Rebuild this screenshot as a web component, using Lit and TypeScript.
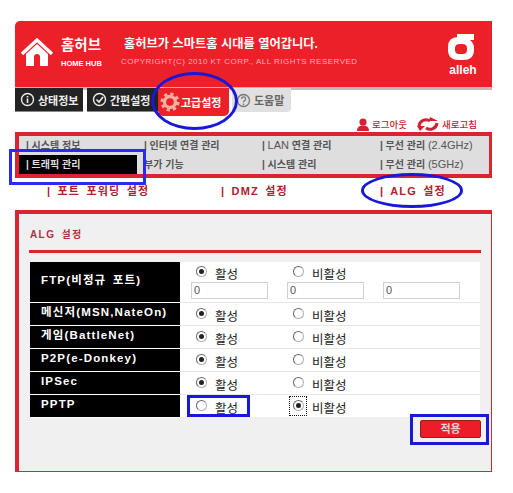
import { LitElement, html, css, svg } from "lit";
import { customElement } from "lit/decorators.js";

const rows = [
  { label: "메신저(MSN,NateOn)", on: true },
  { label: "게임(BattleNet)", on: true },
  { label: "P2P(e-Donkey)", on: true },
  { label: "IPSec", on: true },
  { label: "PPTP", on: false },
];

@customElement("app-root")
export class AppRoot extends LitElement {
  static styles = css`
    :host { display: block; position: relative; width: 513px; height: 493px; overflow: hidden; background: #fff;
      font-family: "Liberation Sans", "Noto Sans CJK KR", sans-serif; }
    .page { width: 477px; padding: 21px 0 0 15px; display: flex; flex-direction: column; }
    .header { height: 66px; background: #ec2029; border-radius: 5px 0 0 0; border-bottom: 3px solid #c4b8b4; display: flex; align-items: flex-start; color: #fff; }
    .home { margin: 16px 0 0 6px; width: 34px; height: 30px; flex: none; }
    .brand { margin: 14px 0 0 6px; width: 60px; flex: none; }
    .brand b { display: block; font-size: 14.5px; line-height: 20px; font-weight: 700; }
    .brand small { display: block; font-size: 7.5px; line-height: 9px; margin-top: 4px; font-weight: 700; white-space: nowrap; }
    .slogan { width: 327px; margin-top: 14px; flex: none; }
    .slogan b { display: block; font-size: 12.25px; line-height: 18px; padding-left: 3px; color: #fff; }
    .slogan small { display: block; font-size: 8px; line-height: 10px; margin-top: 4px; color: #f6b0b0; letter-spacing: .48px; white-space: nowrap; }
    .logo { width: 30px; margin-top: 13px; text-align: center; flex: none; }
    .logo svg { display: block; margin: 0; }
    .logo span { display: block; font-size: 12px; font-weight: 700; line-height: 12px; margin-top: 3px; }
    .tabs { display: flex; align-items: flex-start; height: 26px; margin-top: -2px; position: relative; }
    .tab { height: 24px; display: flex; align-items: center; gap: 3px; font-size: 11px; font-weight: 700; box-sizing: border-box; white-space: nowrap; }
    .tab.dark { background: #232323; color: #eee; border-bottom: 1px solid #888; }
    .tab.s1 { width: 68px; padding-left: 5px; margin-right: 4px; }
    .tab.s2 { width: 71px; padding-left: 5px; }
    .tab.active { width: 71px; height: 28px; background: #ec2029; color: #fff; border-radius: 0 0 5px 5px; padding-left: 2px; gap: 1px; }
    .tab.help { width: 59px; margin-left: 3px; background: #e0e0e0; color: #666; padding-left: 4px; border-radius: 0 0 4px 0; }
    .util { display: flex; justify-content: flex-end; align-items: center; height: 16px; margin-top: 2px; padding-right: 15px; font-size: 9.5px; font-weight: 500; color: #c8202c; gap: 3px; }
    .util .gap { width: 4px; }
    .menu { height: 46px; box-sizing: border-box; border: 4px solid #dc2430; border-width: 4px 3px 4px 4px; background: #dedede; display: grid; grid-template-columns: 118px 118px 118px 1fr; grid-auto-rows: 19px; }
    .menu div { font-size: 10px; font-weight: 700; color: #555; padding-left: 7px; line-height: 19px; white-space: nowrap; }
    .menu .en { font-size: 11px; font-weight: 400; }
    .menu .sel { background: #000; color: #ddd; }
    .sub { height: 32px; box-sizing: border-box; padding: 0 0 8px 32px; display: grid; grid-template-columns: 174px 159px 1fr; align-items: center; font-size: 11px; font-weight: 700; color: #b02030; letter-spacing: 1.2px; word-spacing: 2px; white-space: nowrap; }
    .card { height: 262px; box-sizing: border-box; background: #f0f0f0; border-style: solid; border-color: #dc2430; border-width: 4px 1px 1px 4px; padding: 14px 10px 0 10px; display: flex; flex-direction: column; }
    .card h2 { margin: 0 0 0 1px; font-size: 10px; line-height: 14px; letter-spacing: 1.4px; word-spacing: 2px; font-weight: 700; color: #b03040; }
    .rule { height: 3px; background: #dc2430; margin: 8px 0 9px 0; }
    .table { width: 450px; margin-left: 1px; background: #fff; }
    .row { display: grid; grid-template-columns: 150px 1fr; height: 23px; box-sizing: border-box; border-bottom: 1px solid #e6e6e6; }
    .row:last-child { border-bottom: 0; height: 22px; }
    .row.first { height: 41px; }
    .th { background: #000; color: #fff; font-weight: 700; font-size: 11.5px; letter-spacing: 1.15px; padding: 2px 0 0 11px; line-height: 14px; white-space: nowrap; box-shadow: 0 1px 0 #fff; }
    .row.first .th { padding-top: 11px; word-spacing: 2px; }
    .td { padding-left: 16px; }
    .opts { display: flex; height: 22px; align-items: center; }
    .opt { width: 96px; display: flex; align-items: center; font-size: 12.5px; color: #222; gap: 8px; flex: none; padding-top: 2px; box-sizing: border-box; }
    .opt.off { margin-left: 1px; gap: 8px; }
    .row.first .opts { height: 20px; }
    .radio { width: 9px; height: 9px; margin-top: -3px; border-radius: 50%; border: 1px solid #b0b0b0; border-top-color: #666; border-left-color: #666; background: #fff; display: flex; align-items: center; justify-content: center; flex: none; box-sizing: content-box; }
    .radio.on::after { content: ""; width: 5px; height: 5px; border-radius: 50%; background: #222; }
    .inputs { display: flex; gap: 19px; margin-left: -5px; }
    .inputs span { width: 77px; height: 17px; box-sizing: border-box; border: 1px solid #d0d0d0; font-size: 11px; color: #555; line-height: 15px; padding-left: 2px; background: #fff; }
    .actions { display: flex; justify-content: flex-end; padding: 3px 0 0 0; }
    .btn { width: 61px; height: 18px; box-sizing: border-box; background: #ee1c28; border: 1px solid #902020; border-radius: 2px; color: #fbd0d0; font-size: 11px; font-weight: 700; text-align: center; line-height: 16px; }
    .focus { position: absolute; left: 289px; top: 396px; width: 18px; height: 20px; border: 1px dotted #111; box-sizing: border-box; }
    .mark { position: absolute; border: 3px solid #1818d8; box-sizing: border-box; }
    .ell { border-radius: 50%; }
    .m1 { left: 151px; top: 72px; width: 87px; height: 58px; }
    .m2 { left: 9px; top: 149px; width: 137px; height: 36px; border-color: #2a2af0; }
    .m3 { left: 361px; top: 173px; width: 102px; height: 35px; }
    .m4 { left: 187px; top: 395px; width: 63px; height: 22px; }
    .m5 { left: 410px; top: 414px; width: 79px; height: 31px; }
  `;

  private radio(on: boolean) {
    return html`<span class="radio ${on ? "on" : ""}"></span>`;
  }

  private opts(on: boolean) {
    return html`<div class="opts">
      <span class="opt">${this.radio(on)}활성</span>
      <span class="opt off">${this.radio(!on)}비활성</span>
    </div>`;
  }

  private circ(d: unknown) {
    return html`<svg width="15" height="15" viewBox="0 0 15 15" fill="none">${d}</svg>`;
  }

  render() {
    return html`
      <div class="page">
        <div class="header">
          <svg class="home" viewBox="0 0 34 30">
            <path fill="none" stroke="#fff" stroke-width="3.4" d="M1 17 16 3l15 14" />
            <path fill="#fff" fill-rule="evenodd" d="M5 17 16 7l11 10v12H5ZM13 29h6V20a3 3 0 0 0-6 0Z" />
          </svg>
          <div class="brand"><b>홈허브</b><small>HOME HUB</small></div>
          <div class="slogan">
            <b>홈허브가 스마트홈 시대를 열어갑니다.</b>
            <small>COPYRIGHT(C) 2010 KT CORP., ALL RIGHTS RESERVED</small>
          </div>
          <div class="logo">
            <svg width="27" height="27" viewBox="0 0 27 27">
              <path fill="#fff" fill-rule="evenodd" d="M10 3H26V6H22Q26 9 26 14V16Q26 26 15 26H11Q0 26 0 16V13Q0 3 10 3ZM12 10Q7 10 7 14V16Q7 20 11 20H15Q19 20 19 16V14Q19 10 14 10Z" />
              <path fill="#fff" d="M9 0H26V6H9Z" />
              <path fill="#ec2029" d="M0 0H9V2Q3 3 1 7H0Z" />
            </svg>
            <span>alleh</span>
          </div>
        </div>
        <div class="tabs">
          <div class="tab dark s1">${this.circ(svg`<circle cx="7.5" cy="7.5" r="6" stroke="#eee" stroke-width="1.4"/><path d="M7.500 6.500v4.500M7.500 4v1.600" stroke="#eee" stroke-width="1.6"/>`)}상태정보</div>
          <div class="tab dark s2">${this.circ(svg`<circle cx="7.5" cy="7.5" r="6" stroke="#eee" stroke-width="1.4"/><path d="M4.500 7.500 7 10l4-5" stroke="#eee" stroke-width="1.6"/>`)}간편설정</div>
          <div class="tab active">
            <svg width="20" height="20" viewBox="0 0 20 20" fill="none">
              <circle cx="10" cy="10" r="5.500" stroke="#f9aea0" stroke-width="3.400" />
              <circle cx="10" cy="10" r="8" stroke="#f9aea0" stroke-width="3" stroke-dasharray="3.280 3" />
            </svg>
            고급설정
          </div>
          <div class="tab help">${this.circ(svg`<circle cx="7.5" cy="7.5" r="6" stroke="#777" stroke-width="1.3"/><path d="M5.600 6a2 2 0 1 1 3 1.600c-.8.5-1.100.9-1.100 1.700M7.500 10.400V12" stroke="#777" stroke-width="1.3"/>`)}도움말</div>
        </div>
        <div class="util">
          <svg width="12" height="13" viewBox="0 0 12 13"><circle cx="6" cy="4" r="3.600" fill="#d42030"/><path d="M0 13c0-4 2.500-5.500 6-5.500s6 1.500 6 5.500Z" fill="#d42030"/></svg>
          <span>로그아웃</span>
          <span class="gap"></span>
          <svg width="22" height="14" viewBox="0 0 22 14" fill="none"><path d="M2 9a7 7 0 0 1 11-5" stroke="#d42030" stroke-width="3"/><path d="M20 6a7 7 0 0 1-11 5" stroke="#d42030" stroke-width="3"/><path d="M13 0 21 4H12ZM0 9H8L3 14Z" fill="#d42030"/></svg>
          <span>새로고침</span>
        </div>
        <div class="menu">
          <div>| 시스템 정보</div><div>| 인터넷 연결 관리</div><div>| <span class="en">LAN</span> 연결 관리</div><div>| 무선 관리 <span class="en">(2.4GHz)</span></div>
          <div class="sel">| 트래픽 관리</div><div>부가 기능</div><div>| 시스템 관리</div><div>| 무선 관리 <span class="en">(5GHz)</span></div>
        </div>
        <div class="sub"><span>| 포트 포워딩 설정</span><span>| DMZ 설정</span><span>| ALG 설정</span></div>
        <div class="card">
          <h2>ALG 설정</h2>
          <div class="rule"></div>
          <div class="table">
            <div class="row first">
              <div class="th">FTP(비정규 포트)</div>
              <div class="td">
                ${this.opts(true)}
                <div class="inputs"><span>0</span><span>0</span><span>0</span></div>
              </div>
            </div>
            ${rows.map((r) => html`<div class="row"><div class="th">${r.label}</div><div class="td">${this.opts(r.on)}</div></div>`)}
          </div>
          <div class="actions"><div class="btn">적용</div></div>
        </div>
      </div>
      <div class="focus"></div>
      <div class="mark ell m1"></div>
      <div class="mark m2"></div>
      <div class="mark ell m3"></div>
      <div class="mark m4"></div>
      <div class="mark m5"></div>
    `;
  }
}
